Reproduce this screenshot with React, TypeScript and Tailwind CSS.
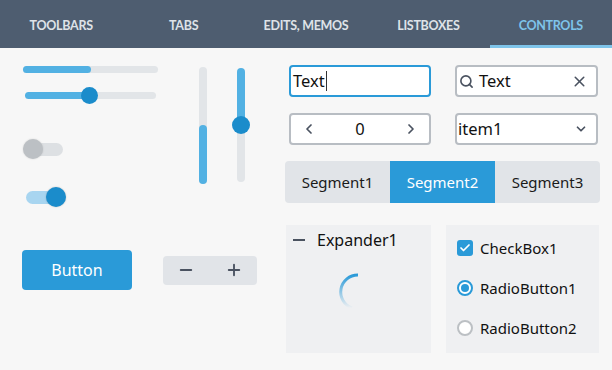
import { Check, ChevronDown, ChevronLeft, ChevronRight, Minus, Plus, Search, X } from "lucide-react"

const tabs = ["TOOLBARS", "TABS", "EDITS, MEMOS", "LISTBOXES", "CONTROLS"]

function Spinner() {
  return (
    <svg width="40" height="40" viewBox="-20 -20 40 40">
      <defs>
        <linearGradient id="spin" x1="0" y1="0" x2="0" y2="1">
          <stop offset="0" stopColor="#2a9ad8" stopOpacity="1" />
          <stop offset="1" stopColor="#2a9ad8" stopOpacity="0" />
        </linearGradient>
      </defs>
      <path d="M 0 -17 A 17 17 0 0 0 -6 16" fill="none" stroke="url(#spin)" strokeWidth="3" />
    </svg>
  )
}

export default function App() {
  return (
    <div className="w-[612px] h-[370px] bg-[#f7f7f7] overflow-hidden" style={{ fontFamily: '"Noto Sans", "Open Sans", sans-serif' }}>
      <div className="h-[48px] bg-[#4e5d70] grid grid-cols-5">
        {tabs.map((t, i) => (
          <div
            key={t}
            className={
              i === 4
                ? "flex items-center justify-center border-b-[3px] border-[#7ec4ea] pt-[8px] text-[#7ec4ea]"
                : "flex items-center justify-center border-b-[3px] border-transparent pt-[8px] text-[#dfe3e8]"
            }
          >
            <span className="text-[12.5px] font-bold tracking-[-0.3px]" style={{ fontFamily: "Lato, sans-serif" }}>{t}</span>
          </div>
        ))}
      </div>

      <div className="flex">
        {/* left part */}
        <div className="ml-[22px] w-[240px] flex flex-col">
          <div className="flex">
            <div className="w-[140px] flex flex-col">
              <div className="mt-[18px] h-[7px] w-[135px] rounded-full bg-[#e2e5e8] ml-[1px]">
                <div className="h-full w-[68px] rounded-full bg-[#52b1e3]" />
              </div>
              <div className="mt-[14px] ml-[3px] w-[131px] h-[17px] flex items-center">
                <div className="h-[7px] w-[60px] rounded-l-full bg-[#52b1e3]" />
                <div className="w-[17px] h-[17px] shrink-0 rounded-full bg-[#1b8ccb] -mx-[4px] relative" />
                <div className="h-[7px] flex-1 rounded-r-full bg-[#e2e5e8]" />
              </div>
              <div className="mt-[35px] ml-[1px] w-[40px] h-[20px] flex items-center">
                <div className="w-[20px] h-[20px] shrink-0 rounded-full bg-[#bcc0c4] relative shadow-[0_0_2px_rgba(0,0,0,0.15)]" />
                <div className="h-[13px] w-[28px] -ml-[8px] rounded-r-full bg-[#dde0e3]" />
              </div>
              <div className="mt-[28px] ml-[4px] w-[40px] h-[20px] flex items-center">
                <div className="h-[13px] w-[28px] -mr-[8px] rounded-l-full bg-[#a8d5f0]" />
                <div className="w-[20px] h-[20px] shrink-0 rounded-full bg-[#1b8ccb] relative shadow-[0_0_2px_rgba(0,0,0,0.2)]" />
              </div>
            </div>
            <div className="ml-[37px] mt-[19px] flex">
              <div className="w-[8px] h-[117px] rounded-full bg-[#e2e5e8] flex flex-col justify-end">
                <div className="h-[59px] rounded-full bg-[#52b1e3]" />
              </div>
              <div className="ml-[30px] mt-[1px] w-[8px] h-[114px] flex flex-col items-center">
                <div className="w-[8px] h-[52px] rounded-t-full bg-[#52b1e3]" />
                <div className="w-[18px] h-[18px] shrink-0 rounded-full bg-[#1b8ccb] -my-[4px] relative" />
                <div className="w-[8px] flex-1 rounded-b-full bg-[#e2e5e8]" />
              </div>
            </div>
          </div>
          <div className="mt-[43px] flex items-center">
            <button className="w-[110px] h-[40px] rounded-[4px] bg-[#2a9ad8] text-white text-[16px]">Button</button>
            <div className="ml-[31px] w-[94px] h-[29px] rounded-[4px] bg-[#e1e4e8] flex items-center justify-between px-[14px] text-[#4a5260]">
              <Minus size={18} strokeWidth={2.5} />
              <Plus size={18} strokeWidth={2.5} />
            </div>
          </div>
        </div>

        {/* right part */}
        <div className="ml-[23px] w-[315px] flex flex-col">
          <div className="mt-[17px] flex">
            <div className="ml-[4px] w-[142px] h-[32px] rounded-[4px] border-2 border-[#2a9ad8] bg-white flex items-center px-[2px] text-[16.5px] text-[#111]">
              Text<span className="w-px h-[20px] bg-[#333] ml-[1px]" />
            </div>
            <div className="ml-[24px] w-[143px] h-[32px] rounded-[4px] border-2 border-[#b8bdc3] bg-white flex items-center pl-[2px] pr-[8px] text-[16.5px] text-[#111]">
              <Search size={15} strokeWidth={2.6} className="text-[#4a5260]" />
              <span className="ml-[5px] flex-1">Text</span>
              <X size={17} strokeWidth={2.2} className="text-[#4a5260]" />
            </div>
          </div>
          <div className="mt-[16px] flex">
            <div className="ml-[4px] w-[142px] h-[32px] rounded-[4px] border-2 border-[#b8bdc3] bg-white flex items-center justify-between px-[10px] text-[16.5px] text-[#111]">
              <ChevronLeft size={16} strokeWidth={2.6} className="text-[#4a5260]" />
              <span>0</span>
              <ChevronRight size={16} strokeWidth={2.6} className="text-[#4a5260]" />
            </div>
            <div className="ml-[24px] w-[143px] h-[32px] rounded-[4px] border-2 border-[#b8bdc3] bg-white flex items-center justify-between pl-[1px] pr-[8px] text-[16.5px] text-[#111]">
              <span>item1</span>
              <ChevronDown size={14} strokeWidth={3} className="text-[#4a5260]" />
            </div>
          </div>
          <div className="mt-[16px] h-[42px] rounded-[4px] bg-[#e1e4e8] grid grid-cols-3 overflow-hidden text-[15px] text-[#1a1a1a]">
            <div className="flex items-center justify-center">Segment1</div>
            <div className="flex items-center justify-center bg-[#2a9ad8] text-white">Segment2</div>
            <div className="flex items-center justify-center">Segment3</div>
          </div>
          <div className="mt-[22px] flex">
            <div className="ml-[1px] w-[145px] h-[128px] bg-[#eff0f2] flex flex-col">
              <div className="mt-[4px] flex items-center h-[22px] text-[16px] text-[#111]">
                <div className="ml-[7px] w-[12px] h-[2px] bg-[#4a5260]" />
                <span className="ml-[12px]">Expander1</span>
              </div>
              <div className="mt-[21px] ml-[52px]">
                <Spinner />
              </div>
            </div>
            <div className="ml-[15px] w-[153px] h-[128px] bg-[#eff0f2] flex flex-col gap-[22px] pt-[14px] pl-[11px] text-[15px] text-[#111]">
              <div className="flex items-center h-[18px]">
                <div className="w-[16px] h-[16px] rounded-[3px] bg-[#2a9ad8] flex items-center justify-center">
                  <Check size={12} strokeWidth={3.5} className="text-white" />
                </div>
                <span className="ml-[7px]">CheckBox1</span>
              </div>
              <div className="flex items-center h-[18px]">
                <div className="w-[16px] h-[16px] rounded-full border-2 border-[#2a9ad8] bg-white flex items-center justify-center">
                  <div className="w-[8px] h-[8px] rounded-full bg-[#2a9ad8]" />
                </div>
                <span className="ml-[7px]">RadioButton1</span>
              </div>
              <div className="flex items-center h-[18px]">
                <div className="w-[16px] h-[16px] rounded-full border-2 border-[#bcc0c4] bg-white" />
                <span className="ml-[7px]">RadioButton2</span>
              </div>
            </div>
          </div>
        </div>
      </div>
    </div>
  )
}
